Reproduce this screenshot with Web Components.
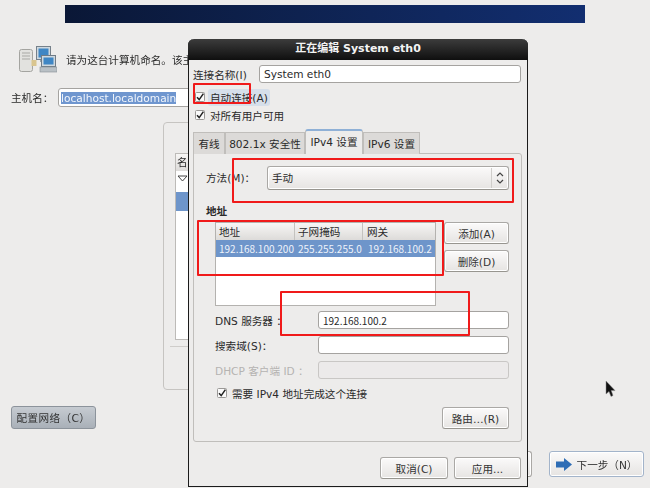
<!DOCTYPE html>
<html lang="zh">
<head>
<meta charset="utf-8">
<title>System eth0</title>
<style>
  html, body { margin: 0; height: 100%; background: #edeceb; }
  body {
    color: #2a2a2a;
    font: 10.6px "DejaVu Sans", "Noto Sans CJK SC", sans-serif;
    overflow: hidden;
  }
</style>
</head>
<body>
<installer-page>
  <net-dialog></net-dialog>
  <red-box style="left:193px;top:83px;width:54px;height:17px"></red-box>
  <red-box style="left:232px;top:158px;width:278px;height:41px"></red-box>
  <red-box style="left:197px;top:220px;width:243px;height:52px"></red-box>
  <red-box style="left:280px;top:291px;width:186px;height:41px"></red-box>
  <mouse-cursor></mouse-cursor>
</installer-page>

<script>
const bevel = `
  background: linear-gradient(#fbfafa, #e6e4e2);
  border: 1px solid #aaa8a5;
  border-bottom-color: #97958f;
  border-radius: 3px;
  box-shadow: inset 0 0 0 1px #fff;
`

class GtkButton extends HTMLElement {
  constructor () {
    super()
    this.attachShadow({ mode: 'open' })
    this.shadowRoot.innerHTML = /* html */`
    <style>
      :host {
        align-items: center;
        box-sizing: border-box;
        color: #333;
        display: inline-flex;
        gap: 5px;
        justify-content: center;
        white-space: nowrap;
        ${bevel}
      }
      :host([pressed]) {
        background: linear-gradient(#c6cbd1, #a9b0b8);
        border-color: #8c939b;
        box-shadow: none;
      }
      :host([focused]) {
        border-color: #a3b4ca;
      }
    </style>
    <slot></slot>`
  }
}

class GtkEntry extends HTMLElement {
  constructor () {
    super()
    this.attachShadow({ mode: 'open' })
    this.shadowRoot.innerHTML = /* html */`
    <style>
      :host {
        align-items: center;
        background: #fff;
        border: 1px solid #a5a3a0;
        border-radius: 3px;
        box-sizing: border-box;
        display: flex;
        padding: 0 4px;
        white-space: nowrap;
      }
      :host([disabled]) {
        background: #eceaea;
        border-color: #c9c7c5;
      }
    </style>
    <slot></slot>`
  }
}

class GtkCheck extends HTMLElement {
  constructor () {
    super()
    this.attachShadow({ mode: 'open' })
    this.shadowRoot.innerHTML = /* html */`
    <style>
      :host {
        align-items: center;
        display: flex;
        gap: 3px;
        white-space: nowrap;
      }
      svg { flex: none; }
      .label { border-radius: 3px; padding: 1px 2px; }
      :host([hover]) .label { background: #d6dfea; }
    </style>
    <svg width="10" height="10" viewBox="0 0 10 10">
      <rect x=".5" y=".5" width="9" height="9" rx="1" fill="#fafafa" stroke="#9a9896"/>
      <path d="M2 5.2 4.2 7.6 8.4 1.6" fill="none" stroke="#222" stroke-width="1.5"/>
    </svg>
    <span class="label"><slot></slot></span>`
  }
}

class AddressTree extends HTMLElement {
  constructor () {
    super()
    this.attachShadow({ mode: 'open' })
    this.shadowRoot.innerHTML = /* html */`
    <style>
      :host {
        background: #fff;
        border: 1px solid #b4b2af;
        box-sizing: border-box;
        display: block;
        font-family: "Noto Sans CJK SC", sans-serif;
      }
      .row {
        display: grid;
        grid-template-columns: 79px 68px 1fr;
      }
      .head {
        background: linear-gradient(#f7f6f5, #dddbd9);
        height: 17px;
        line-height: 17px;
      }
      .head span { padding-left: 3px; border-right: 1px solid #c4c2bf; }
      .head span:last-child { border: 0; padding-left: 4px; }
      .sel {
        background: #6e95ca;
        color: #eef3fa;
        font-size: 10px;
        height: 17px;
        line-height: 17px;
        white-space: nowrap;
      }
      .sel span { padding-left: 3px; }
      .sel span:last-child { padding-left: 5px; }
    </style>
    <div class="row head"><span>地址</span><span>子网掩码</span><span>网关</span></div>
    <div class="row sel"><span>192.168.100.200</span><span>255.255.255.0</span><span>192.168.100.2</span></div>`
  }
}

class Ipv4Panel extends HTMLElement {
  constructor () {
    super()
    this.attachShadow({ mode: 'open' })
    this.shadowRoot.innerHTML = /* html */`
    <style>
      :host {
        background: #edeceb;
        border: 1px solid #c0bebb;
        border-radius: 0 3px 3px 3px;
        box-sizing: border-box;
        display: block;
        height: 289px;
        padding: 12px 12px 0;
      }
      .method { align-items: center; display: flex; height: 24px; }
      .method label { padding-bottom: 2px; width: 61px; }
      .combo {
        align-items: center;
        box-sizing: border-box;
        display: flex;
        flex: 1;
        height: 24px;
        padding-left: 4px;
        ${bevel}
      }
      .combo span { flex: 1; padding-bottom: 2px; }
      .arrows {
        border-left: 1px solid #cfcdca;
        height: 20px;
        width: 16px;
      }
      h4 { font-size: 10.6px; height: 14px; line-height: 15px; margin: 14px 0 4px; }
      .addr { display: flex; gap: 8px; padding-left: 9px; }
      address-tree { height: 84px; width: 221px; }
      .side { display: flex; flex-direction: column; gap: 6px; width: 65px; }
      .side gtk-button { height: 22px; }
      .form {
        align-items: center;
        display: grid;
        grid-template-columns: 103px 1fr;
        grid-auto-rows: 18px;
        margin-top: 5px;
        padding-left: 9px;
        row-gap: 7px;
        white-space: nowrap;
      }
      .form gtk-entry { height: 18px; }
      .num { font: 10px "Noto Sans CJK SC", sans-serif; }
      .off { color: #b5b3b1; }
      gtk-check { margin: 7px 0 0 11px; height: 14px; }
      .route { display: flex; justify-content: flex-end; margin-top: 7px; }
      .route gtk-button { height: 22px; width: 67px; }
    </style>
    <div class="method">
      <label>方法(M)：</label>
      <div class="combo">
        <span>手动</span>
        <svg class="arrows" viewBox="0 0 16 20">
          <path d="M5 8 8 5 11 8M5 12 8 15 11 12" fill="none" stroke="#444" stroke-width="1.2"/>
        </svg>
      </div>
    </div>
    <h4>地址</h4>
    <div class="addr">
      <address-tree></address-tree>
      <div class="side">
        <gtk-button>添加(A)</gtk-button>
        <gtk-button>删除(D)</gtk-button>
      </div>
    </div>
    <div class="form">
      <span>DNS 服务器 ：</span><gtk-entry><span class="num">192.168.100.2</span></gtk-entry>
      <span>搜索域(S)：</span><gtk-entry></gtk-entry>
      <span class="off">DHCP 客户端 ID ：</span><gtk-entry disabled></gtk-entry>
    </div>
    <gtk-check>需要 IPv4 地址完成这个连接</gtk-check>
    <div class="route"><gtk-button>路由…(R)</gtk-button></div>`
  }
}

class NetDialog extends HTMLElement {
  constructor () {
    super()
    this.attachShadow({ mode: 'open' })
    this.shadowRoot.innerHTML = /* html */`
    <style>
      :host {
        background: #edeceb;
        border: solid #1b1b1b;
        border-width: 0 1px 1px;
        border-radius: 6px 6px 0 0;
        box-sizing: border-box;
        display: block;
        height: 448px;
        left: 188px;
        position: absolute;
        top: 39px;
        width: 340px;
      }
      .title {
        background: linear-gradient(#3c3c3c, #0f0f0f);
        border-radius: 6px 6px 0 0;
        color: #f4f4f4;
        font-size: 11px;
        font-weight: bold;
        height: 21px;
        line-height: 20px;
        margin: 0 -1px;
        text-align: center;
      }
      .body { padding: 5px 5px 0 4px; }
      .name { align-items: center; display: flex; height: 18px; }
      .name label { width: 66px; }
      .name gtk-entry { flex: 1; height: 18px; margin-right: 1px; }
      .checks { margin: 5px 0 6px 2px; }
      .checks gtk-check { height: 18px; }
      .tabs { align-items: flex-end; display: flex; height: 24px; margin-bottom: -1px; position: relative; }
      .tab {
        background: #dcdad8;
        border: 1px solid #c0bebb;
        border-bottom: 0;
        box-sizing: border-box;
        height: 22px;
        line-height: 23px;
        text-align: center;
        white-space: nowrap;
      }
      .tab.on {
        background: #edeceb;
        border-top: 2px solid #8fb0d6;
        border-radius: 3px 3px 0 0;
        height: 25px;
        line-height: 22px;
        z-index: 1;
      }
      .actions { display: flex; gap: 6px; justify-content: flex-end; margin: 15px 1px 0 0; }
      .actions gtk-button { height: 22px; width: 67px; }
      .actions gtk-button:first-child { width: 68px; }
    </style>
    <div class="title">正在编辑 System eth0</div>
    <div class="body">
      <div class="name"><label>连接名称(I)</label><gtk-entry>System eth0</gtk-entry></div>
      <div class="checks">
        <gtk-check hover>自动连接(A)</gtk-check>
        <gtk-check>对所有用户可用</gtk-check>
      </div>
      <div class="tabs">
        <div class="tab" style="width:32px">有线</div>
        <div class="tab" style="width:80px">802.1x 安全性</div>
        <div class="tab on" style="width:58px">IPv4 设置</div>
        <div class="tab" style="width:57px">IPv6 设置</div>
      </div>
      <ipv4-panel></ipv4-panel>
      <div class="actions">
        <gtk-button>取消(C)</gtk-button>
        <gtk-button>应用...</gtk-button>
      </div>
    </div>`
  }
}

class RedBox extends HTMLElement {
  constructor () {
    super()
    this.attachShadow({ mode: 'open' })
    this.shadowRoot.innerHTML = /* html */`
    <style>
      :host {
        border: 2px solid #f01a1a;
        border-radius: 1px;
        display: block;
        pointer-events: none;
        position: absolute;
      }
    </style>`
  }
}

class MouseCursor extends HTMLElement {
  constructor () {
    super()
    this.attachShadow({ mode: 'open' })
    this.shadowRoot.innerHTML = /* html */`
    <style>
      :host { display: block; left: 605px; position: absolute; top: 380px; }
      svg { display: block; }
    </style>
    <svg width="11" height="18" viewBox="0 0 11 18">
      <path d="M1 1V14L4 11.5 6 16.5 8 15.5 6.2 10.6H10Z" fill="#111" stroke="#888" stroke-width=".5"/>
    </svg>`
  }
}

class InstallerPage extends HTMLElement {
  constructor () {
    super()
    this.attachShadow({ mode: 'open' })
    this.shadowRoot.innerHTML = /* html */`
    <style>
      :host {
        display: flex;
        filter: blur(.45px);
        flex-direction: column;
        height: 488px;
        overflow: hidden;
        position: relative;
        width: 650px;
      }
      .banner {
        background: linear-gradient(90deg, #0a1736, #0e2250 45%, #122e70);
        flex: none;
        height: 18px;
        margin: 5px 65px 0;
      }
      .intro { align-items: center; display: flex; gap: 9px; height: 27px; margin: 23px 0 0 19px; white-space: nowrap; }
      .host { align-items: center; display: flex; height: 19px; margin: 15px 0 0 11px; white-space: nowrap; }
      .host label { width: 47px; }
      .host gtk-entry { height: 19px; padding-left: 2px; width: 240px; }
      .host span { background: #6f96cf; color: #f2f6fc; }
      .group {
        border: 1px solid #c6c4c1;
        border-radius: 4px;
        box-sizing: border-box;
        height: 268px;
        margin: 15px 0 0 163px;
        padding: 30px 0 0 11px;
        width: 300px;
      }
      .list { background: #fff; border: 1px solid #bdbbb8; box-sizing: border-box; height: 187px; }
      .list .hd { background: linear-gradient(#f7f6f5, #dddbd9); height: 17px; line-height: 17px; padding-left: 1px; }
      .list .tw { height: 17px; }
      .list .tw svg { display: block; margin: 4px 0 0 1px; }
      .list .on { background: #6e95ca; height: 19px; }
      .rule { border-top: 1px solid #cfcdca; margin: 6px 0 0 -5px; }
      .foot { display: flex; align-items: flex-end; justify-content: space-between; height: 71px; margin-top: 16px; padding: 0 6px 0 11px; }
      .conf { align-self: flex-start; height: 23px; letter-spacing: .4px; width: 85px; }
      .right { display: flex; gap: 17px; }
      .back { height: 26px; width: 40px; }
      .next { height: 26px; width: 95px; }
    </style>
    <div class="banner"></div>
    <div class="intro">
      <svg width="38" height="27" viewBox="0 0 38 27">
        <rect x="0.5" y="3.5" width="13" height="22" rx="2" fill="#e2e2df" stroke="#a4a4a0"/>
        <path d="M3 7H11M3 10H11M3 13H11" stroke="#a9a9a5"/>
        <rect x="12.5" y="14" width="5" height="6" fill="#d9c58f"/>
        <rect x="17.5" y=".5" width="14" height="13" fill="#cfd8df" stroke="#75808a"/>
        <rect x="19.5" y="2.5" width="10" height="9" fill="#3f86c4"/>
        <rect x="21" y="14" width="7" height="2" fill="#9aa3aa"/>
        <rect x="22.5" y="9.5" width="14" height="11" fill="#cfd8df" stroke="#6f7b86"/>
        <rect x="24.5" y="11.5" width="10" height="7" fill="#3f86c4"/>
        <rect x="21" y="21" width="17" height="5" fill="#b9c0c5" stroke="#868e94" stroke-width=".6"/>
      </svg>
      <span>请为这台计算机命名。该主机名将用于标识这台计算机。</span>
    </div>
    <div class="host">
      <label>主机名：</label>
      <gtk-entry><span>localhost.localdomain</span></gtk-entry>
    </div>
    <div class="group">
      <div class="list">
        <div class="hd">名称</div>
        <div class="tw"><svg width="11" height="8" viewBox="0 0 11 8"><path d="M1 1H10L5.5 6Z" fill="none" stroke="#444"/></svg></div>
        <div class="on"></div>
      </div>
      <div class="rule"></div>
    </div>
    <div class="foot">
      <gtk-button class="conf" pressed>配置网络（C）</gtk-button>
      <div class="right">
        <gtk-button class="back">返回</gtk-button>
        <gtk-button class="next" focused>
          <svg width="16" height="13" viewBox="0 0 16 13"><path d="M0 3.5H8V0L16 6.5 8 13V9.5H0Z" fill="#2f6db5"/></svg>
          下一步（N）
        </gtk-button>
      </div>
    </div>
    <slot></slot>`
  }
}

customElements.define('gtk-button', GtkButton)
customElements.define('gtk-entry', GtkEntry)
customElements.define('gtk-check', GtkCheck)
customElements.define('address-tree', AddressTree)
customElements.define('ipv4-panel', Ipv4Panel)
customElements.define('net-dialog', NetDialog)
customElements.define('red-box', RedBox)
customElements.define('mouse-cursor', MouseCursor)
customElements.define('installer-page', InstallerPage)
</script>
</body>
</html>
